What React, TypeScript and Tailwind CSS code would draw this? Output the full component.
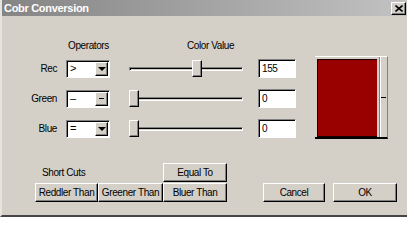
import React from "react";

const font = "font-['Liberation_Sans',Arial,sans-serif]";
const txt = "text-[10px] leading-none tracking-[-0.4px] whitespace-nowrap";

const raised =
  "bg-[#d4d0c8] border border-t-white border-l-white border-r-black border-b-black shadow-[inset_-1px_-1px_0_#808080]";
const sunken =
  "bg-white border border-t-[#808080] border-l-[#808080] border-r-white border-b-white shadow-[inset_1px_1px_0_#000]";

const Combo = ({ value, dash }: { value: string; dash?: boolean }) => (
  <div className={`${sunken} w-[44px] h-[18px] flex items-center`}>
    <span className="flex-1 pl-[3px] text-[11px] leading-none">{value}</span>
    <div className={`${raised} w-[13px] h-[14px] mr-[1px] flex items-center justify-center`}>
      {dash ? (
        <div className="w-[5px] h-[1px] bg-black" />
      ) : (
        <div className="w-0 h-0 border-l-[4px] border-r-[4px] border-t-[4px] border-l-transparent border-r-transparent border-t-black" />
      )}
    </div>
  </div>
);

const Slider = ({ value }: { value: number }) => (
  <div className="relative w-[114px] h-[17px] flex items-center">
    <div className="w-full h-[4px] border-t border-l border-t-[#808080] border-l-[#808080] border-b border-r border-b-white border-r-white shadow-[inset_1px_1px_0_#000]" />
    <div
      className={`${raised} absolute top-0 w-[10px] h-[17px]`}
      style={{ left: Math.round((value / 255) * 104) }}
    />
  </div>
);

const Row = ({ label, op, value, dash }: { label: string; op: string; value: number; dash?: boolean }) => (
  <div className="flex items-center h-[19px] pl-[28px]">
    <span className={`w-[27px] text-right ${txt}`}>{label}</span>
    <div className="ml-[9px]">
      <Combo value={op} dash={dash} />
    </div>
    <div className="ml-[19px]">
      <Slider value={value} />
    </div>
    <div className={`${sunken} ml-[15px] w-[38px] h-[19px] flex items-center pl-[3px] ${txt}`}>
      {value}
    </div>
  </div>
);

const Btn = ({ children, w }: { children: React.ReactNode; w: string }) => (
  <button className={`${raised} ${w} h-[19px] flex items-center justify-center ${txt}`}>
    {children}
  </button>
);

export default function App() {
  return (
    <div className={`${font} w-[407px] h-[217px] bg-[#d4d0c8] border-l-2 border-l-[#e6e4de] border-b-2 border-b-[#454545] text-black flex flex-col overflow-hidden`}>
      {/* title bar */}
      <div className="h-[16px] bg-gradient-to-r from-[#858585] to-[#c2c2c2] flex items-center pl-[2px] pr-[1px]">
        <span className="text-white font-bold text-[11px] leading-none tracking-[-0.3px]">Cobr Conversion</span>
        <button className={`${raised} ml-auto w-[15px] h-[13px] flex items-center justify-center`}>
          <svg width="8" height="7" viewBox="0 0 8 7">
            <path d="M0.5 0.5 L7.5 6.5 M7.5 0.5 L0.5 6.5" stroke="#000" strokeWidth="1.6" />
          </svg>
        </button>
      </div>

      {/* column headers */}
      <div className={`flex mt-[25px] h-[11px] ${txt}`}>
        <span className="ml-[66px] w-[119px]">Operators</span>
        <span>Color Value</span>
      </div>

      {/* rows + swatch */}
      <div className="flex items-start mt-[4px]">
        <div className="flex flex-col gap-[11px] mt-[3px]">
          <Row label="Rec" op=">" value={155} />
          <Row label="Green" op="–" value={0} dash />
          <Row label="Blue" op="=" value={0} />
        </div>
        <div className="ml-[19px] w-[73px] h-[83px] border-t border-t-white border-b-2 border-b-black border-r border-r-[#808080] flex">
          <div className="ml-[2px] mt-[2px] w-[60px] h-[78px] bg-[#990000] border-l border-b border-t border-[#1a0000]" />
          <div className="ml-[2px] flex-1 border-l border-l-[#808080] shadow-[inset_1px_0_0_#fff] flex items-center justify-center">
            <div className="w-[5px] h-[1px] bg-black" />
          </div>
        </div>
      </div>

      {/* bottom buttons */}
      <div className="flex items-end mt-[24px]">
        <div className="flex flex-col ml-[33px]">
          <div className="flex items-end">
            <span className={`ml-[7px] mb-[4px] ${txt}`}>Short Cuts</span>
            <div className="ml-auto">
              <Btn w="w-[64px]">Equal To</Btn>
            </div>
          </div>
          <div className="flex mt-[1px]">
            <Btn w="w-[63px]">Reddler Than</Btn>
            <Btn w="w-[65px]">Greener Than</Btn>
            <Btn w="w-[64px]">Bluer Than</Btn>
          </div>
        </div>
        <div className="ml-[36px]">
          <Btn w="w-[62px]">Cancel</Btn>
        </div>
        <div className="ml-[8px]">
          <Btn w="w-[64px]">OK</Btn>
        </div>
      </div>
    </div>
  );
}
